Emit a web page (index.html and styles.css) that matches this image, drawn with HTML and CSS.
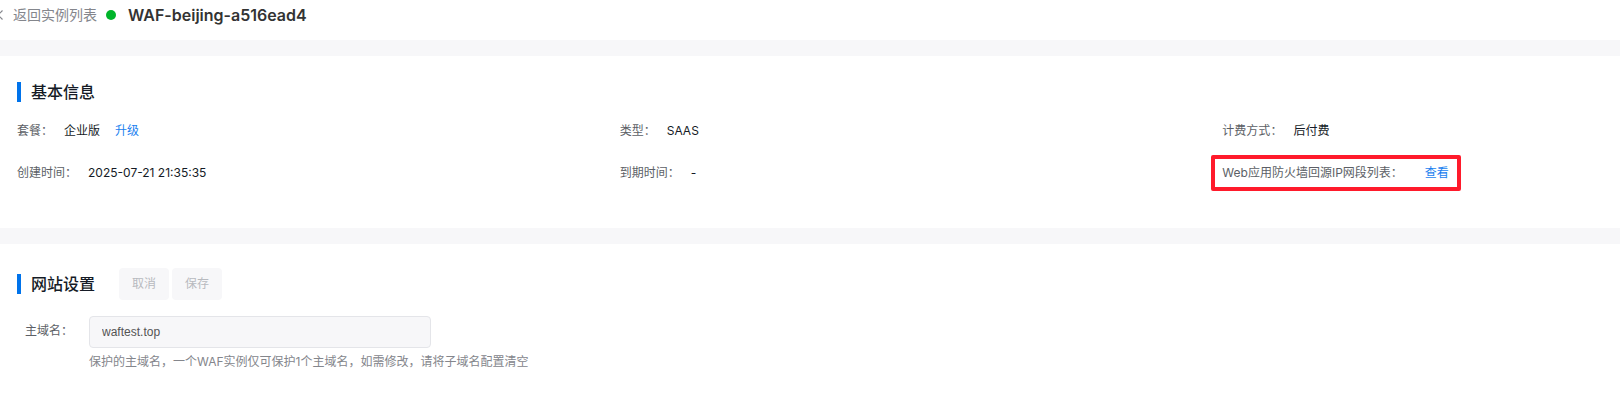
FILE: index.html
```html
<!DOCTYPE html>
<html lang="zh-CN">
<head>
  <meta charset="UTF-8" />
  <meta name="viewport" content="width=device-width, initial-scale=1.0"/>
  <title>WAF-beijing-a516ead4</title>
  <link rel="stylesheet" href="styles.css">
</head>
<body>
  <header class="topbar">
    <a class="back" href="#">
      <svg class="back-icon" viewBox="0 0 6 10" width="6" height="10" aria-hidden="true">
        <path d="M5.5 0.5L1 5l4.500 4.500" fill="none" stroke="currentColor" stroke-width="1.200"/>
      </svg>
      返回实例列表
    </a>
    <span class="status"></span>
    <h1 class="name">WAF-beijing-a516ead4</h1>
  </header>

  <main>
    <section class="card">
      <div class="card-head">
        <h2 class="card-title">基本信息</h2>
      </div>
      <dl class="info">
        <div class="info-item">
          <dt>套餐<span class="colon">：</span></dt>
          <dd>企业版<a class="link upgrade" href="#">升级</a></dd>
        </div>
        <div class="info-item">
          <dt>类型<span class="colon">：</span></dt>
          <dd>SAAS</dd>
        </div>
        <div class="info-item">
          <dt>计费方式<span class="colon">：</span></dt>
          <dd>后付费</dd>
        </div>
        <div class="info-item">
          <dt>创建时间<span class="colon">：</span></dt>
          <dd>2025-07-21 21:35:35</dd>
        </div>
        <div class="info-item">
          <dt>到期时间<span class="colon">：</span></dt>
          <dd>-</dd>
        </div>
        <div class="info-item marked">
          <dt>Web应用防火墙回源IP网段列表<span class="colon">：</span></dt>
          <dd><a class="link view" href="#">查看</a></dd>
        </div>
      </dl>
    </section>

    <section class="card">
      <div class="card-head">
        <h2 class="card-title">网站设置</h2>
        <div class="actions">
          <button class="btn" type="button" disabled>取消</button>
          <button class="btn" type="button" disabled>保存</button>
        </div>
      </div>
      <div class="field">
        <label for="domain">主域名<span class="colon">：</span></label>
        <div class="field-body">
          <input id="domain" type="text" value="waftest.top" disabled>
          <p class="help">保护的主域名，一个WAF实例仅可保护1个主域名，如需修改，请将子域名配置清空</p>
        </div>
      </div>
    </section>
  </main>
</body>
</html>
```
FILE: styles.css
```css
*,
*::after {
  box-sizing: border-box;
}
body {
  margin: 0;
  font-family: Inter, "Noto Sans CJK SC", sans-serif;
  font-size: 12px;
  line-height: 20px;
  color: #151b26;
  background: #fff;
  overflow-x: hidden;
}
h1, h2, dl, dd, p {
  margin: 0;
}
a {
  text-decoration: none;
}

/* top bar */
.topbar {
  display: flex;
  align-items: center;
  height: 40px;
  padding-bottom: 10px;
}
.back {
  display: flex;
  align-items: center;
  gap: 10px;
  margin-left: -3px;
  font-size: 14px;
  color: #84868c;
}
.status {
  width: 10px;
  height: 10px;
  margin: 0 12px 0 9px;
  border-radius: 50%;
  background: #00b42a;
}
.name {
  font-size: 16px;
  font-weight: 600;
  color: #333;
}

/* cards */
.card {
  padding: 24px 17px 45px;
  border-top: 16px solid #f7f7f9;
}
.card-head {
  display: flex;
  align-items: center;
  gap: 24px;
  min-height: 24px;
}
.card-title {
  padding-left: 10px;
  border-left: 4px solid #0073eb;
  font-size: 16px;
  font-weight: 500;
}

/* info list */
.info {
  display: grid;
  grid-template-columns: 38fr 38fr 24fr;
  row-gap: 22px;
  margin-top: 17px;
}
.info-item {
  position: relative;
  display: flex;
  gap: 11px;
}
.info-item dt {
  color: #5c5f66;
}
.colon {
  font-family: "Noto Sans CJK SC", sans-serif;
  line-height: 1;
}
.link {
  color: #1a7fef;
}
.upgrade {
  margin-left: 15px;
}
.view {
  margin-left: 11px;
}
/* red frame around the back-to-origin IP entry */
.marked::after {
  content: "";
  position: absolute;
  top: -8px;
  left: -11px;
  width: 250px;
  height: 36px;
  border: 4px solid #ff1a2b;
  border-radius: 2px;
  pointer-events: none;
}

/* site settings */
.actions {
  display: flex;
  gap: 3px;
}
.btn {
  height: 32px;
  padding: 0 13px;
  border: none;
  border-radius: 4px;
  font: inherit;
  color: #b8babf;
  background: #f7f7f9;
}
.field {
  display: flex;
  gap: 16px;
  margin-top: 16px;
  padding-left: 8px;
}
.field label {
  padding-top: 5px;
  color: #5c5f66;
}
.field-body {
  flex: 1;
}
.field input {
  display: block;
  width: 100%;
  max-width: 342px;
  height: 32px;
  padding: 0 12px;
  border: 1px solid #e4e5e9;
  border-radius: 4px;
  font-family: "Liberation Sans", Arial, sans-serif;
  font-size: 12px;
  color: #545454;
  background: #f7f7f9;
}
.help {
  margin-top: 4px;
  color: #84868c;
}
```
